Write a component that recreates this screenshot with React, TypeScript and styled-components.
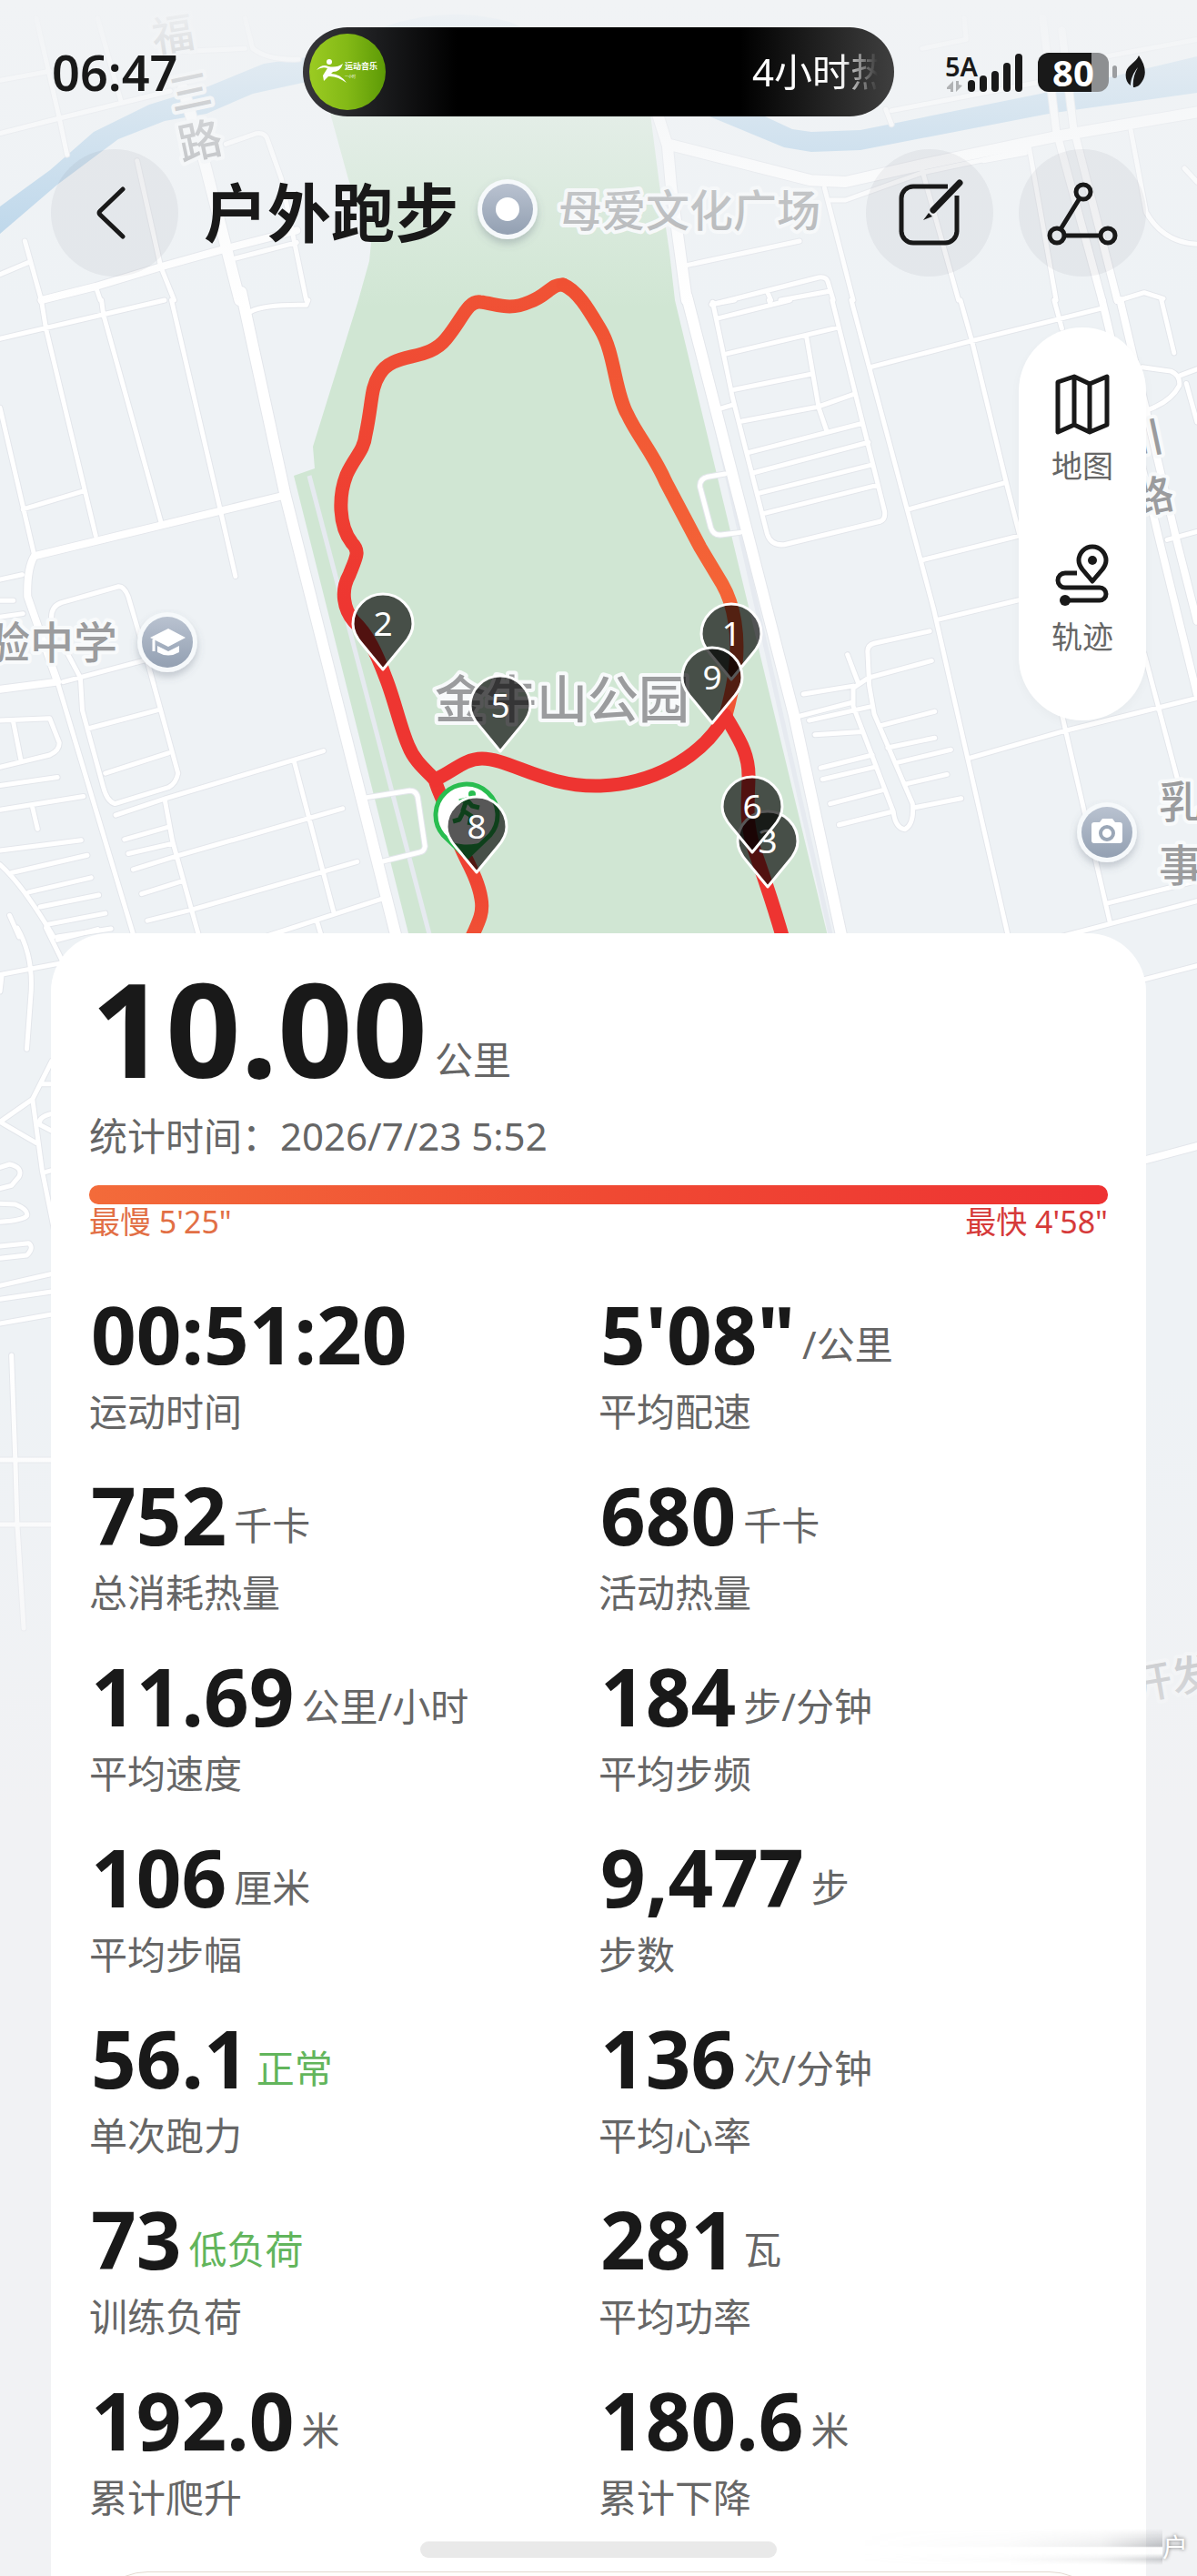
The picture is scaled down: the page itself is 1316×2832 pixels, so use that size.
import React from 'react';
import styled, { createGlobalStyle } from 'styled-components';

const FONT = '"Noto Sans", "Noto Sans CJK SC", sans-serif';
const CJK = '"Noto Sans CJK SC", "Noto Sans", sans-serif';

const GlobalStyle = createGlobalStyle`
  *, *::before, *::after { box-sizing: border-box; }
  body { margin: 0; background: #f1f2f4; font-family: ${FONT}; color: #191919; }
  h1, p, dl, dt, dd { margin: 0; }
  button { border: 0; padding: 0; font: inherit; color: inherit; cursor: pointer; }
`;

const Screen = styled.div`
  position: relative;
  display: flex;
  flex-direction: column;
  height: 100vh;
  overflow: hidden;
  background: #f1f2f4;
`;

const MapLayer = styled.svg`
  position: absolute;
  top: 0;
  left: 0;
  width: 100%;
  height: auto;
`;

/* ---------- status bar ---------- */

const StatusBar = styled.div`
  position: relative;
  display: grid;
  grid-template-columns: 1fr 650px 1fr;
  align-items: center;
  padding: 30px 57px 0;
`;

const Clock = styled.time`
  font-size: 54px;
  font-weight: 600;
  line-height: 64px;
`;

const Island = styled.div`
  display: flex;
  align-items: center;
  justify-content: space-between;
  height: 98px;
  padding: 0 18px 0 7px;
  border-radius: 49px;
  color: #fff;
  background: linear-gradient(90deg, #37373b 0, #1d1e20 12%, #000 26%, #000 74%, #3f3f3f 100%);
`;

const Marquee = styled.span`
  width: 138px;
  overflow: hidden;
  white-space: nowrap;
  font-size: 42px;
  line-height: 56px;
  mask-image: linear-gradient(90deg, #000 70%, transparent 100%);
`;

const StatusIcons = styled.div`
  display: flex;
  align-items: center;
  justify-content: flex-end;
  gap: 9px;
`;

const Network = styled.div`
  display: flex;
  align-items: flex-end;
  margin-right: 8px;
`;

const NetworkType = styled.div`
  display: flex;
  flex-direction: column;
  width: 25px;
  white-space: nowrap;
  font-size: 29px;
  font-weight: 600;
  line-height: 32px;
`;

const Battery = styled.div`
  display: flex;
  align-items: center;
  gap: 4px;

  &::after {
    content: '';
    width: 5px;
    height: 14px;
    border-radius: 3px;
    background: #9b9da0;
  }
`;

const BatteryBody = styled.span`
  width: 78px;
  height: 43px;
  border-radius: 12px;
  text-align: center;
  color: #fff;
  font-size: 40px;
  font-weight: 700;
  line-height: 43px;
  background: linear-gradient(90deg, #191919 76%, #8d8f91 76%);
`;

/* ---------- header ---------- */

const Header = styled.header`
  position: relative;
  display: flex;
  align-items: center;
  gap: 28px;
  padding: 36px 56px 0;
`;

const Title = styled.h1`
  flex: 1;
  font-size: 70px;
  font-weight: 700;
  line-height: 96px;
`;

const RoundButton = styled.button`
  display: grid;
  place-items: center;
  width: 140px;
  height: 140px;
  border-radius: 50%;
  background: rgba(40, 40, 50, 0.05);
`;

/* ---------- map tools ---------- */

const MapTools = styled.nav`
  position: relative;
  align-self: flex-end;
  display: flex;
  flex-direction: column;
  gap: 66px;
  width: 140px;
  margin: 56px 56px 0 0;
  padding: 50px 0 72px;
  border-radius: 70px;
  background: #fff;
  box-shadow: 0 4px 12px rgba(0, 0, 0, 0.03);
`;

const ToolButton = styled.button`
  display: flex;
  flex-direction: column;
  align-items: center;
  gap: 14px;
  background: none;
  color: #191919;
`;

const ToolLabel = styled.span`
  font-size: 34px;
  line-height: 40px;
  color: #666;
`;

/* ---------- summary sheet ---------- */

const Sheet = styled.main`
  position: relative;
  flex: 1;
  min-height: 0;
  overflow: hidden;
  margin: 234px 56px 0;
  padding: 23px 42px 0;
  border-radius: 64px 64px 0 0;
  background: #fff;
`;

const Reading = styled.div`
  display: flex;
  align-items: flex-end;
  gap: 8px;
`;

const Value = styled.span<{ $hero?: boolean }>`
  padding-left: 2px;
  font-size: ${(p) => (p.$hero ? 144 : 87)}px;
  line-height: ${(p) => (p.$hero ? 160 : 96)}px;
  font-weight: 700;
`;

const Unit = styled.span<{ $hero?: boolean; $good?: boolean }>`
  padding-bottom: ${(p) => (p.$hero ? 16 : 8)}px;
  font-size: 42px;
  line-height: 56px;
  color: ${(p) => (p.$good ? '#62b55c' : '#666')};
`;

const RecordedAt = styled.p`
  margin-top: 10px;
  font-size: 42px;
  line-height: 60px;
  color: #666;
`;

const PaceBar = styled.div`
  height: 21px;
  margin-top: 24px;
  border-radius: 10px;
  background: linear-gradient(90deg, #f36b3a, #f04a33 50%, #ee3233);
`;

const PaceRange = styled.div`
  display: flex;
  justify-content: space-between;
`;

const PaceLabel = styled.span<{ $fast?: boolean }>`
  font-size: 34px;
  line-height: 38px;
  color: ${(p) => (p.$fast ? '#d63a3a' : '#e26f45')};
`;

const Metrics = styled.dl`
  display: grid;
  grid-template-columns: 1fr 1fr;
  row-gap: 35px;
  margin-top: 56px;
`;

const Metric = styled.div`
  display: flex;
  flex-direction: column-reverse;
  gap: 8px;
`;

const MetricLabel = styled.dt`
  font-size: 42px;
  line-height: 60px;
  color: #666;
`;

const NextPanel = styled.section`
  height: 200px;
  margin-top: 51px;
  border: 1px solid #e3d9d0;
  border-radius: 64px;
  background: #fffefc;
`;

const HomeIndicator = styled.div`
  position: absolute;
  bottom: 20px;
  left: 50%;
  width: 392px;
  height: 18px;
  margin-left: -196px;
  border-radius: 9px;
  background: #e9e9e9;
`;

const Ticker = styled.div`
  position: absolute;
  right: 10px;
  bottom: 12px;
  display: flex;
  align-items: center;
`;

const TickerTrail = styled.span`
  width: 340px;
  height: 40px;
  background: linear-gradient(
    180deg,
    rgba(110, 114, 120, 0) 0,
    rgba(110, 114, 120, 0.4) 48%,
    rgba(255, 255, 255, 0.9) 52%,
    rgba(255, 255, 255, 0.9) 68%,
    rgba(110, 114, 120, 0.3) 84%,
    rgba(110, 114, 120, 0) 100%
  );
  mask-image: linear-gradient(90deg, transparent, rgba(0, 0, 0, 0.08) 50%, rgba(0, 0, 0, 0.3) 80%, #000);
`;

const TickerText = styled.span`
  font-size: 28px;
  line-height: 40px;
  color: #fff;
  text-shadow: 0 0 4px rgba(0, 0, 0, 0.6);
`;

/* ---------- map data ---------- */

type Tile = { at: string; main?: string; mid?: string; small: string };

const TILES: Tile[] = [
  {
    at: 'translate(0 0) scale(.42092 .33333)',
    main: 'M478 290L535 540L626 990',
    mid: 'M108 990L250 945L420 880L590 820L775 760',
    small:
      'M95 60L155 390L175 510M358 530L420 880L455 990M0 440L155 390L445 300M0 905L75 865M65 795L108 990M250 945L262 990M590 475L670 440Q690 436 697 455L735 590L800 990M615 852L775 800M255 60L315 330M640 60L660 160Q700 200 780 195M0 265L130 235M460 170L640 160',
  },
  {
    at: 'translate(656 0) scale(.42092 .33333)',
    main: 'M150 340L185 480L195 620L235 990M185 475L560 595L650 600L860 540L1200 450L1568 370',
    mid: 'M1165 60L1200 430L1320 990M1215 100L1245 420L1360 990',
    small:
      'M610 660L650 660L850 570L1000 530L1130 490L1200 990M850 560L945 990M595 620L670 990M235 875L530 795M300 1005L580 915Q600 912 604 930L618 990M445 960L455 990M480 990L610 960M1395 430L1435 700Q1480 800 1568 805M1535 555L1568 600M1365 990L1430 965L1480 985M755 360L770 410M770 365L1160 270M960 60L965 130L850 160M1568 130L1230 210M1010 530L1120 505',
  },
  {
    at: 'translate(0 330) scale(.42092 .44643)',
    main: 'M630 -20L745 480L1035 1568',
    mid: 'M745 480L90 630Q70 660 72 730L150 940L0 958',
    small:
      'M0 95L430 0M108 0L120 70L250 580M265 0L270 35L420 545M448 0L575 515L615 680M0 265L90 630M60 515L218 470M655 28Q690 10 800 12L805 0M0 688L58 676M0 740L35 740M0 780L60 772M135 790Q130 755 160 745L310 705Q325 705 335 730L385 890L465 1165Q460 1190 440 1200L300 1240Q280 1235 270 1200L215 1010L210 930L165 850M165 940L385 885M230 1055L410 1010M275 1165L440 1115M150 940L350 1568M0 1035L130 1030L155 1090Q155 1110 130 1120L0 1150M35 1040L55 1135M0 1195L150 1175M0 1255L218 1222M85 1250L98 1302M0 1355L212 1330M30 1410L228 1367M0 1390Q60 1440 140 1568M75 1458L238 1422M105 1494L258 1465M120 1538L275 1510M150 1568L290 1548M25 1515L50 1568M302 1268L430 1228L845 1110M430 1228L450 1330L520 1568M325 1328L438 1298M335 1363L450 1338M348 1402L465 1368L895 1252M370 1462L478 1430M385 1528L505 1500L933 1383M768 1135L873 1512M690 1568L1005 1472M828 1530L840 1568M955 1225L1070 1208Q1090 1208 1092 1230L1110 1345Q1108 1358 1095 1360L1000 1382',
  },
  {
    at: 'translate(656 330) scale(.42092 .44643)',
    main: 'M235 -10L515 1020L640 1568',
    mid: 'M1320 0L1472 600L1568 970M1367 0L1517 600L1568 790',
    small:
      'M300 10L360 0M303 5L355 240L445 575Q455 605 490 602L740 545Q755 540 752 520L615 0M315 45L505 0M450 0L455 12M340 132L632 67M548 90L580 265L600 320M360 220L560 182M320 268L355 258M380 298L580 262L670 232M398 375L695 303M410 425L710 350M425 475L720 405M438 525L735 455M665 0L880 760L1075 1568M950 0L980 100L1070 450L1105 580M715 165L980 100L1320 20M1195 0L1215 70M815 515L1065 450M850 640L1105 580M890 787L1105 738M870 815L725 845Q705 850 708 870L712 950L725 1020L825 1240Q830 1290 805 1303Q780 1300 775 1260L670 1000V955L710 930L875 888M655 873L682 940M540 970L670 950M515 1028L670 990M555 1035L720 1000M570 1070L692 1063M740 1048L883 1013M585 1152L720 1120M590 1180L725 1150M760 1102L883 1078M780 1140L925 1107M610 1240L745 1207M805 1192L915 1168M633 1292L770 1260M828 1250L952 1227M972 1128L1225 1060L1568 980M1215 1020L1340 1530M1430 870L1520 1190M1335 1485L1568 1430M1210 1568L1568 1480M335 428L290 435Q268 440 270 460L298 560Q305 580 325 578L375 572M1425 165L1500 175Q1525 185 1522 210Q1500 250 1440 270M1525 185L1568 170M1540 205L1568 300M1475 0L1508 130M1490 590L1568 570',
  },
  {
    at: 'translate(0 1020) scale(.42092 .33333)',
    small:
      'M150 40L255 5M45 0Q90 100 80 230L70 400M120 0L165 115L0 155M5 155L0 210M135 440L85 565L0 640L95 710M85 565L110 800L150 1050M105 515H135M120 805L135 800M0 790L25 780Q60 790 50 820L30 850L0 860M0 910L40 912Q75 930 70 950Q60 965 0 970M0 1050L75 1040Q90 1055 70 1080L0 1090M150 610Q95 620 105 650L135 670',
  },
  {
    at: 'translate(656 1020) scale(.42092 .33333)',
    mid: 'M1400 777L1568 720',
    small: 'M1400 180L1568 125',
  },
  {
    at: 'translate(0 1400) scale(.42092 .33333)',
    small: 'M0 40L140 0M0 85L135 60M0 165L135 135M30 270L40 615L45 830L62 1170M0 615H135M0 828H135',
  },
];

const LAYERS = [
  { key: 'main', width: 12 },
  { key: 'mid', width: 8 },
  { key: 'small', width: 5 },
] as const;

const Roads = ({ casing }: { casing?: boolean }) => (
  <g fill="none" stroke={casing ? '#e3e6eb' : '#fff'} strokeLinecap="round" strokeLinejoin="round">
    {TILES.map((tile) => (
      <g key={tile.at} transform={tile.at}>
        {LAYERS.map(({ key, width }) =>
          tile[key] ? (
            <path key={key} d={tile[key]} strokeWidth={casing ? width + 2 : width} vectorEffect="non-scaling-stroke" />
          ) : null,
        )}
      </g>
    ))}
  </g>
);

const PlaceName = styled.text<{ $tone?: string; $size?: number }>`
  font-family: ${CJK};
  font-size: ${(p) => p.$size ?? 48}px;
  font-weight: 500;
  fill: ${(p) => p.$tone ?? '#9b9c9e'};
  stroke: #f8fafb;
  stroke-width: 8px;
  stroke-linejoin: round;
  paint-order: stroke;
`;

const PinNumber = styled.text`
  font-family: ${FONT};
  font-size: 37px;
  fill: #fff;
  text-anchor: middle;
`;

const PINS = [
  { n: 1, x: 804, y: 697 },
  { n: 2, x: 421, y: 686 },
  { n: 3, x: 844, y: 925 },
  { n: 5, x: 550, y: 776 },
  { n: 6, x: 827, y: 887 },
  { n: 8, x: 524, y: 909 },
  { n: 9, x: 783, y: 745 },
];

const PIN_SHAPE = 'M0 50L-23 22C-30 14-33 7-33 0A33 33 0 0 1 33 0C33 7 30 14 23 22Z';

const Poi = ({ x, y, children }: { x: number; y: number; children: React.ReactNode }) => (
  <g transform={`translate(${x} ${y})`}>
    <circle r="33" fill="#f6f9fb" filter="url(#soft)" />
    <circle r="28" fill="url(#poi)" />
    {children}
  </g>
);

const RunMap = () => (
  <MapLayer viewBox="0 0 1316 2832" role="img" aria-label="跑步轨迹地图">
    <defs>
      <linearGradient id="fadeTop" x1="0" y1="0" x2="0" y2="1">
        <stop offset="0" stopColor="#f1f3f5" />
        <stop offset=".15" stopColor="#f1f3f5" stopOpacity=".8" />
        <stop offset="1" stopColor="#f1f3f5" stopOpacity="0" />
      </linearGradient>
      <linearGradient id="fadeBottom" x1="0" y1="0" x2="0" y2="1">
        <stop offset="0" stopColor="#f1f2f4" stopOpacity="0" />
        <stop offset="1" stopColor="#f1f2f4" />
      </linearGradient>
      <linearGradient id="poi" x1="0" y1="0" x2="0" y2="1">
        <stop offset="0" stopColor="#b9c2d0" />
        <stop offset="1" stopColor="#93a0b2" />
      </linearGradient>
      <linearGradient id="runWest" gradientUnits="userSpaceOnUse" x1="0" y1="310" x2="0" y2="1026">
        <stop offset="0" stopColor="#f05335" />
        <stop offset=".5" stopColor="#ee3631" />
        <stop offset=".8" stopColor="#ee3531" />
        <stop offset="1" stopColor="#f05035" />
      </linearGradient>
      <linearGradient id="runEast" gradientUnits="userSpaceOnUse" x1="0" y1="310" x2="0" y2="790">
        <stop offset="0" stopColor="#f05033" />
        <stop offset=".7" stopColor="#f46437" />
        <stop offset="1" stopColor="#f05433" />
      </linearGradient>
      <filter id="soft" x="-40%" y="-40%" width="180%" height="190%">
        <feDropShadow dx="0" dy="5" stdDeviation="4" floodColor="#5b6675" floodOpacity=".3" />
      </filter>
    </defs>

    <rect width="1316" height="2832" fill="#eef2f5" />
    <path
      d="M360 110L364 128L383 197L408 267L406 287L394 330L344 491L346 515L323 523L455 1050H915L742 330L736 277L725 203L713 110Z"
      fill="#d0e6d3"
    />
    <path
      d="M0 227L55 187L103 145L164 115L229 95L290 70L337 63L421 30Q490 5 560 24L800 128H841L871 142L892 145L946 143L1144 103L1316 62V102L1180 121L1153 125L946 165L892 167L862 162L780 128L560 60L337 90L278 103L227 125L181 133L130 153L63 203L0 257Z"
      fill="#b0d0e8"
    />
    <path d="M340 523L478 1050M756 330L916 1040" stroke="#e6eaf0" strokeWidth="5" fill="none" />
    <Roads casing />
    <Roads />

    <PlaceName x="614" y="249" $tone="#a9abad">母爱文化广场</PlaceName>
    <PlaceName $tone="#989a9d" $size={46} transform="translate(170 58) rotate(-9)">福</PlaceName>
    <PlaceName $tone="#989a9d" $size={46} transform="translate(190 122) rotate(-12)">三</PlaceName>
    <PlaceName $tone="#a3a5a8" $size={48} transform="translate(200 177) rotate(-12)">路</PlaceName>
    <PlaceName x="-15" y="724">验中学</PlaceName>
    <PlaceName x="478" y="789" $size={56}>金牛山公园</PlaceName>
    <PlaceName x="1274" y="899">乳</PlaceName>
    <PlaceName x="1274" y="969">事</PlaceName>
    <PlaceName $size={46} transform="translate(1236 504) rotate(-12)">川</PlaceName>
    <PlaceName $size={46} transform="translate(1248 567) rotate(-12)">路</PlaceName>
    <PlaceName $tone="#8a8c90" $size={46} transform="translate(1246 1870) rotate(-10)">开发</PlaceName>

    <rect width="1316" height="340" fill="url(#fadeTop)" />
    <rect y="1500" width="1316" height="500" fill="url(#fadeBottom)" />
    <rect y="1999" width="1316" height="833" fill="#f1f2f4" />

    <Poi x={558} y={230}>
      <circle r="13" fill="#fff" />
    </Poi>
    <Poi x={184} y={706}>
      <path d="M-19-5L1-15L20-5L1 5ZM-11 4L1 10L13 4V11Q1 18-11 11Z" fill="#fff" />
      <path d="M-15-3V10" stroke="#fff" strokeWidth="3" />
    </Poi>
    <Poi x={1217} y={915}>
      <path d="M-17-8Q-17-11-14-11H-8L-5-15H6L9-11H14Q17-11 17-8V9Q17 12 14 12H-14Q-17 12-17 9Z" fill="#fff" />
      <circle r="7" cy="1" fill="none" stroke="#9ba7b7" strokeWidth="4" />
    </Poi>

    <g fill="none" strokeWidth="15" strokeLinejoin="round" strokeLinecap="round">
      <path
        stroke="url(#runWest)"
        d="M517 1034C526 1014 532 1004 529 988C525 962 508 940 500 915C494 890 484 878 478 857C470 848 456 838 449 820C440 800 434 770 424 745C414 718 404 697 389 683C378 670 374 650 384 632C392 612 396 606 387 597C372 578 372 545 381 522C390 502 400 496 402 478C410 440 407 428 417 412C432 386 470 398 490 373C508 352 514 330 528 332C546 334 560 342 582 332C602 325 606 312 619 313"
      />
      <path
        stroke="url(#runEast)"
        d="M619 313C636 320 648 342 660 362C676 388 676 432 690 456C700 478 718 498 732 530L770 602L794 642C808 666 812 700 809 730C807 752 802 772 797 790"
      />
      <path
        stroke="#ee3431"
        d="M797 786C812 812 824 828 823 856C822 890 820 900 828 930C838 960 850 992 862 1036M797 788C770 835 715 862 660 864C600 866 560 834 530 834C510 834 496 850 478 857"
      />
    </g>

    <g transform="translate(513 893)">
      <path d="M0 50L-26 25A34 34 0 1 1 26 25Z" fill="#fff" stroke="#29bd50" strokeWidth="5" strokeLinejoin="round" />
      <path d="M-22 31Q0 40 22 31L0 50Z" fill="#29bd50" />
      <path d="M-8-12L0-14L6-7L14-5M0-13L-4-2L5 4L3 14M-4 0L-8 8L-15 10" fill="none" stroke="#29bd50" strokeWidth="5" strokeLinejoin="round" />
      <circle cx="6" cy="-20" r="4" fill="#29bd50" />
    </g>

    {PINS.map(({ n, x, y }) => (
      <g key={n} transform={`translate(${x} ${y})`}>
        <path d={PIN_SHAPE} fill="rgba(0,0,0,.66)" stroke="#fff" strokeWidth="3" strokeLinejoin="round" />
        <PinNumber y="13">{n}</PinNumber>
      </g>
    ))}
  </MapLayer>
);

/* ---------- icons ---------- */

const AlbumArt = () => (
  <svg width="84" height="84" viewBox="0 0 84 84" aria-hidden="true">
    <defs>
      <linearGradient id="album">
        <stop offset="0" stopColor="#9bcb22" />
        <stop offset=".5" stopColor="#83b916" />
        <stop offset="1" stopColor="#5d9a06" />
      </linearGradient>
    </defs>
    <circle cx="42" cy="42" r="42" fill="url(#album)" />
    <circle cx="22" cy="31" r="3" fill="#fff" />
    <path d="M8 40Q14 33 21 36Q30 38 37 33Q34 42 26 42L24 44Q34 44 41 54Q30 46 21 47L16 52L15 46L20 38Q14 36 8 40Z" fill="#fff" />
    <text x="39" y="39" fontSize="9" fontWeight="700" fill="#fff" fontFamily="Noto Sans CJK SC">运动音乐</text>
    <text x="39" y="49" fontSize="4" fill="#fff" fontFamily="Noto Sans CJK SC">一小时</text>
  </svg>
);

const SignalIcon = () => (
  <svg width="60" height="43" viewBox="0 0 60 43" aria-hidden="true">
    {[
      [0, 30],
      [13, 25],
      [26, 20],
      [39, 11],
      [52, 1],
    ].map(([x, y]) => (
      <rect key={x} x={x} y={y} width="8" height={43 - y} rx="4" fill="#191919" />
    ))}
  </svg>
);

const DataArrows = () => (
  <svg width="20" height="12" viewBox="-2 0 20 12" aria-hidden="true">
    <path d="M0 7L7 0V12H4V9H0ZM17 5L10 12V0H13V4Z" fill="#b0b2b4" />
  </svg>
);

const LeafIcon = () => (
  <svg width="22" height="36" viewBox="0 0 22 36" aria-hidden="true">
    <path d="M15 0C22 10 24 20 19 28C16 33 13 35 9 35C8 28 10 20 14 13C9 19 6 26 6 33C1 29 0 24 1 18C3 10 12 8 15 0Z" fill="#191919" />
  </svg>
);

const BackIcon = () => (
  <svg width="44" height="60" viewBox="0 0 44 60" fill="none" stroke="#191919" strokeWidth="5" strokeLinecap="round" strokeLinejoin="round" aria-hidden="true">
    <path d="M31 4L6 28Q4 30 6 32L31 56" />
  </svg>
);

const EditIcon = () => (
  <svg width="74" height="75" viewBox="-3 0 74 75" fill="none" stroke="#191919" strokeWidth="5" aria-hidden="true">
    <path d="M54 8H16A13 13 0 0 0 3 21V57A13 13 0 0 0 16 70H51A13 13 0 0 0 64 57V18" />
    <path d="M67 4L38 34" strokeWidth="7" strokeLinecap="round" />
    <path d="M33 37L37 41L27 45Z" fill="#191919" stroke="none" />
    <path d="M31 34L39 42" stroke="#e7eaed" strokeWidth="1" />
  </svg>
);

const ShareIcon = () => (
  <svg width="80" height="75" viewBox="0 0 80 75" fill="none" stroke="#191919" strokeWidth="5" aria-hidden="true">
    <circle cx="41" cy="14" r="8" />
    <circle cx="12" cy="62" r="8" />
    <circle cx="68" cy="62" r="8" />
    <path d="M37 21L16 55M20 62H60" />
  </svg>
);

const FoldedMapIcon = () => (
  <svg width="64" height="68" viewBox="0 0 64 68" fill="none" stroke="currentColor" strokeWidth="5" strokeLinejoin="round" aria-hidden="true">
    <path d="M5 10L23 4L40 12L59 4V57L40 65L23 57L5 65ZM23 4V57M40 12V65" />
  </svg>
);

const TrackIcon = () => (
  <svg width="64" height="68" viewBox="0 2 64 68" fill="none" stroke="currentColor" strokeWidth="5" strokeLinejoin="round" aria-hidden="true">
    <path d="M43 43L32 30C29 26 28 23 28 20A15 15 0 0 1 58 20C58 23 57 26 54 30Z" />
    <circle cx="43" cy="20" r="5" fill="currentColor" stroke="none" />
    <path d="M26 34H13A8 8 0 0 0 13 50H51A7 7 0 0 1 51 64H13" />
    <circle cx="13" cy="64" r="6" fill="currentColor" stroke="none" />
  </svg>
);

/* ---------- content ---------- */

const METRICS = [
  { value: '00:51:20', unit: '', label: '运动时间' },
  { value: '5\'08"', unit: '/公里', label: '平均配速' },
  { value: '752', unit: '千卡', label: '总消耗热量' },
  { value: '680', unit: '千卡', label: '活动热量' },
  { value: '11.69', unit: '公里/小时', label: '平均速度' },
  { value: '184', unit: '步/分钟', label: '平均步频' },
  { value: '106', unit: '厘米', label: '平均步幅' },
  { value: '9,477', unit: '步', label: '步数' },
  { value: '56.1', unit: '正常', label: '单次跑力', good: true },
  { value: '136', unit: '次/分钟', label: '平均心率' },
  { value: '73', unit: '低负荷', label: '训练负荷', good: true },
  { value: '281', unit: '瓦', label: '平均功率' },
  { value: '192.0', unit: '米', label: '累计爬升' },
  { value: '180.6', unit: '米', label: '累计下降' },
];

export default function App() {
  return (
    <>
      <GlobalStyle />
      <Screen>
        <RunMap />

        <StatusBar>
          <Clock>06:47</Clock>
          <Island>
            <AlbumArt />
            <Marquee>4小时热</Marquee>
          </Island>
          <StatusIcons>
            <Network>
              <NetworkType>
                5A
                <DataArrows />
              </NetworkType>
              <SignalIcon />
            </Network>
            <Battery>
              <BatteryBody>80</BatteryBody>
            </Battery>
            <LeafIcon />
          </StatusIcons>
        </StatusBar>

        <Header>
          <RoundButton aria-label="返回">
            <BackIcon />
          </RoundButton>
          <Title>户外跑步</Title>
          <RoundButton aria-label="编辑">
            <EditIcon />
          </RoundButton>
          <RoundButton aria-label="分享">
            <ShareIcon />
          </RoundButton>
        </Header>

        <MapTools>
          <ToolButton>
            <FoldedMapIcon />
            <ToolLabel>地图</ToolLabel>
          </ToolButton>
          <ToolButton>
            <TrackIcon />
            <ToolLabel>轨迹</ToolLabel>
          </ToolButton>
        </MapTools>

        <Sheet>
          <Reading>
            <Value $hero>10.00</Value>
            <Unit $hero>公里</Unit>
          </Reading>
          <RecordedAt>统计时间：2026/7/23 5:52</RecordedAt>
          <PaceBar />
          <PaceRange>
            <PaceLabel>最慢 5'25"</PaceLabel>
            <PaceLabel $fast>最快 4'58"</PaceLabel>
          </PaceRange>
          <Metrics>
            {METRICS.map((m) => (
              <Metric key={m.label}>
                <MetricLabel>{m.label}</MetricLabel>
                <Reading as="dd">
                  <Value>{m.value}</Value>
                  {m.unit && <Unit $good={m.good}>{m.unit}</Unit>}
                </Reading>
              </Metric>
            ))}
          </Metrics>
          <NextPanel />
        </Sheet>

        <HomeIndicator />
        <Ticker>
          <TickerTrail />
          <TickerText>户</TickerText>
        </Ticker>
      </Screen>
    </>
  );
}
